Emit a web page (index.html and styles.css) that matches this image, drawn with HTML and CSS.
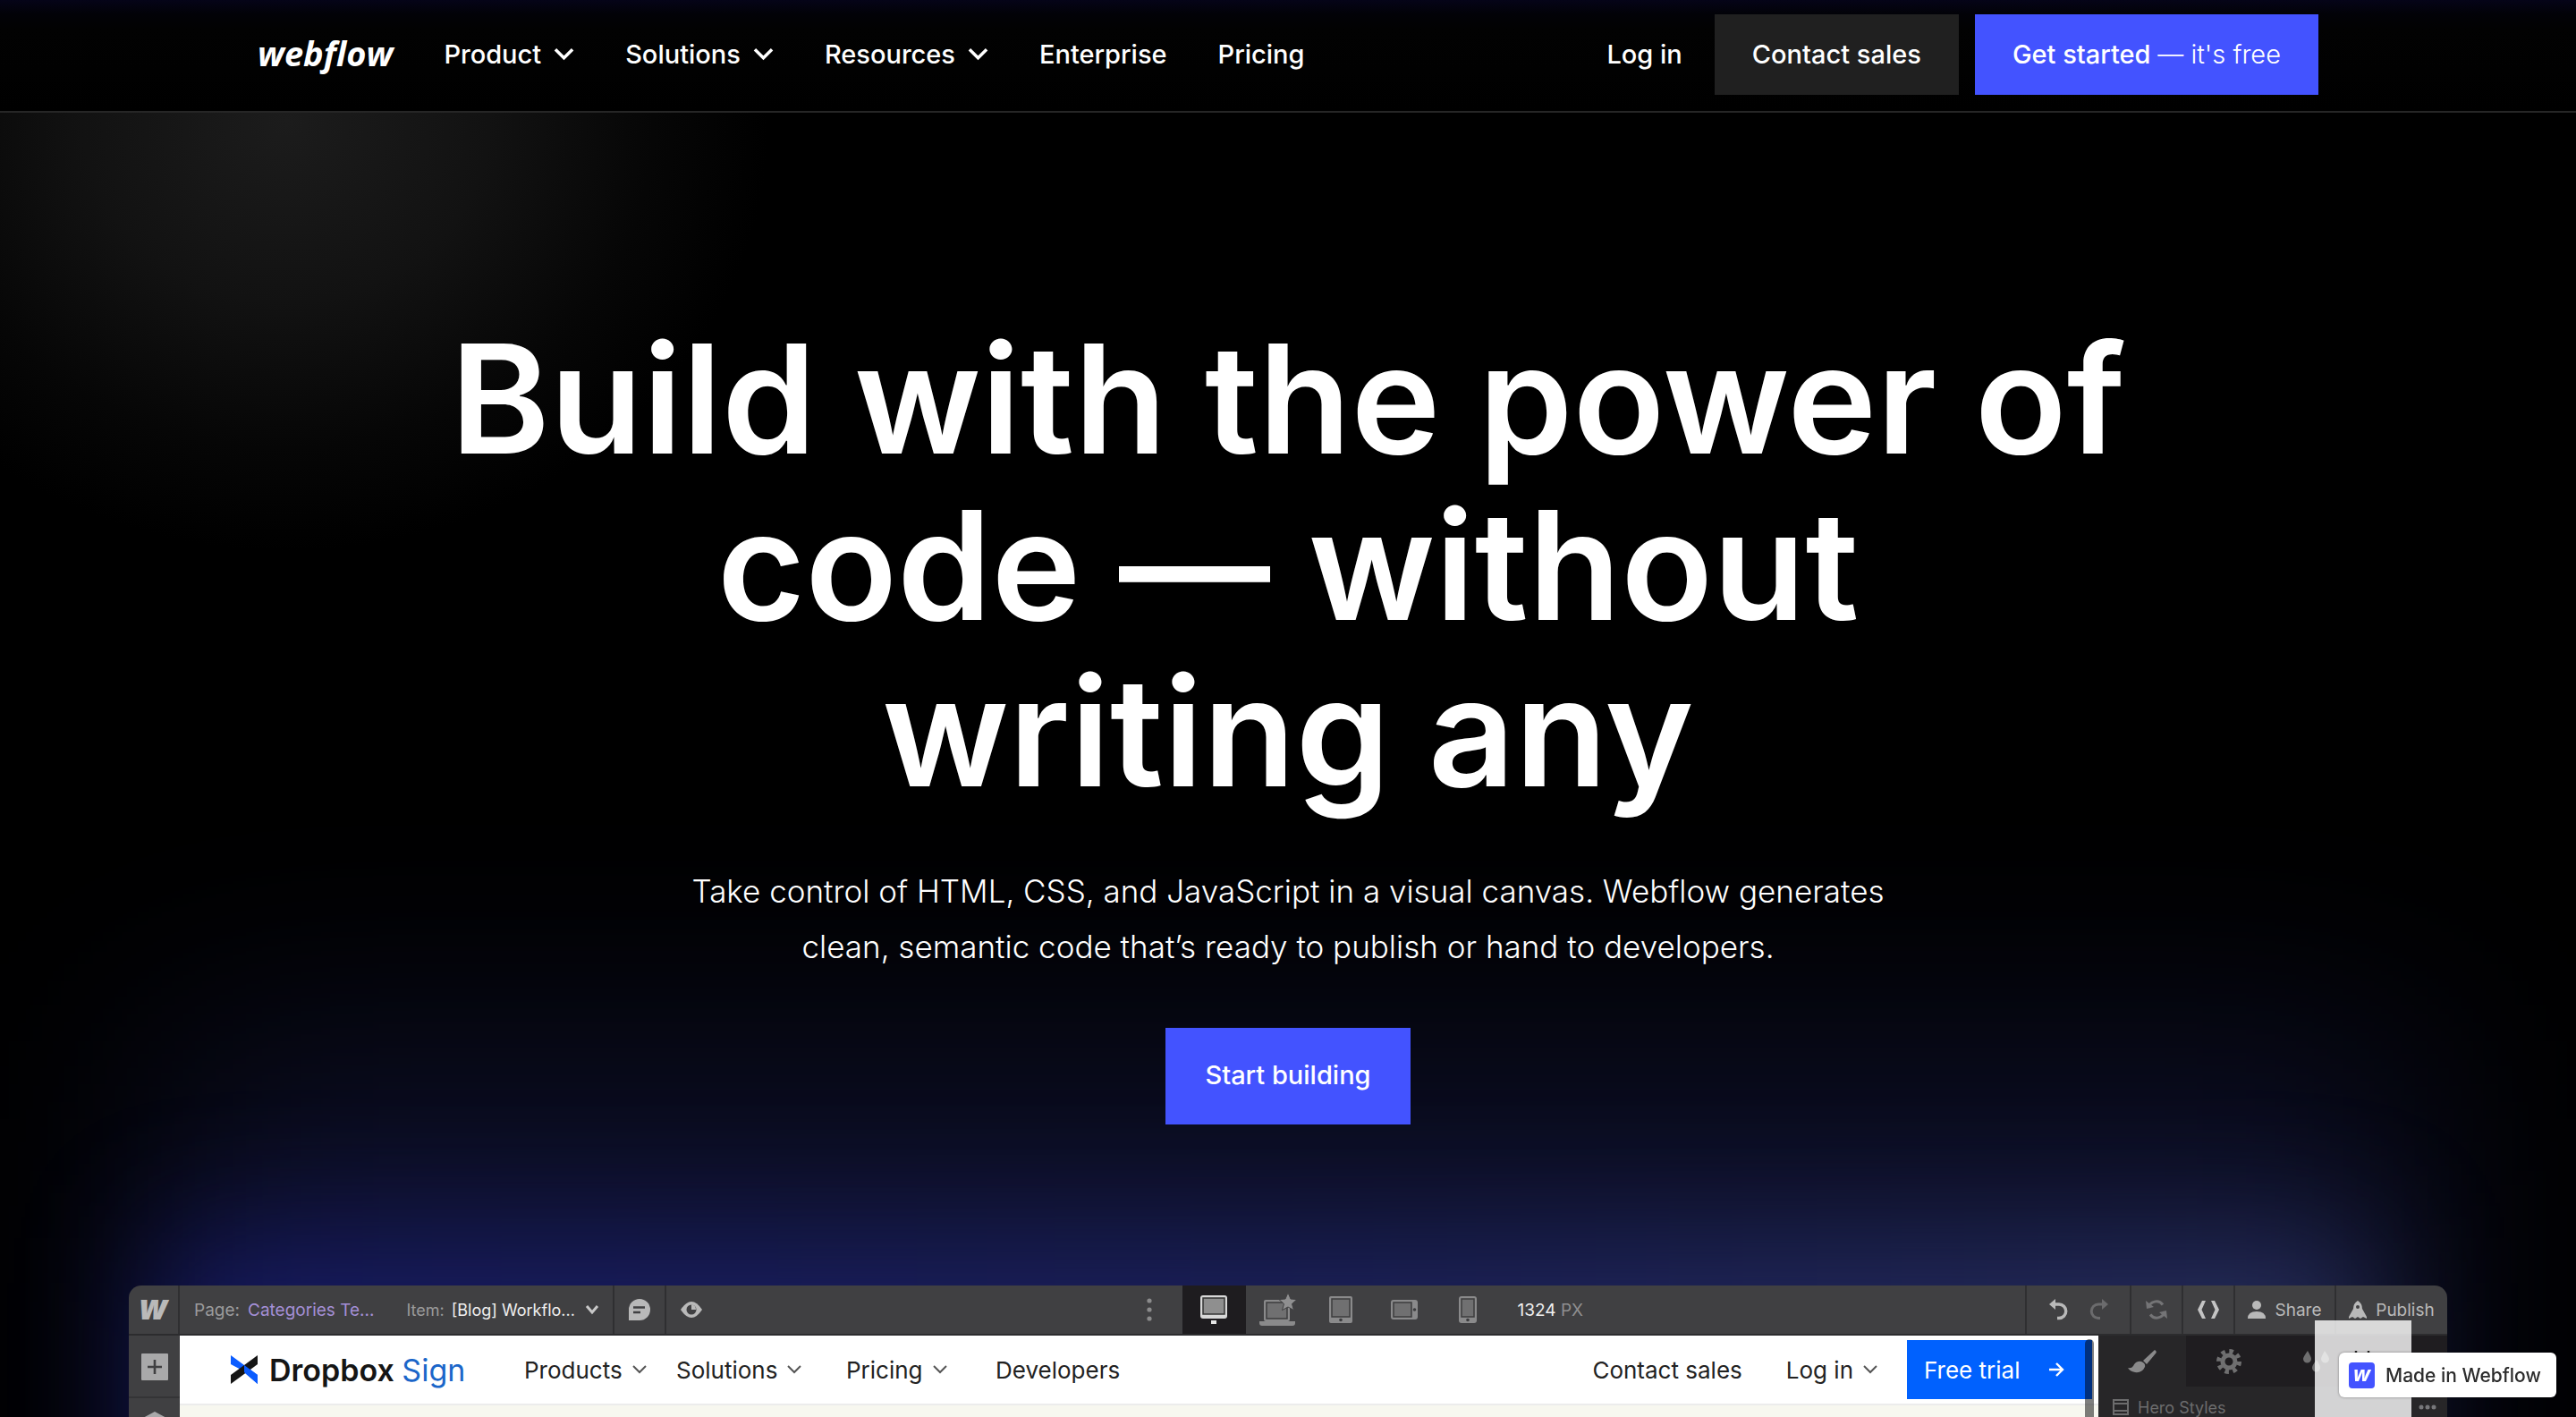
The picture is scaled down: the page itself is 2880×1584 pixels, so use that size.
FILE: index.html
```
<!DOCTYPE html>
<html lang="en">
<head>
<meta charset="utf-8">
<title>Webflow</title>
<link rel="stylesheet" href="styles.css">
</head>
<body>
<svg class="defs" aria-hidden="true">
  <symbol id="chev" viewBox="0 0 24 16"><path d="M2 3l10 10L22 3" fill="none" stroke="currentColor" stroke-width="3.6"/></symbol>
  <symbol id="chev-thin" viewBox="0 0 16 12"><path d="M1 2l7 7 7-7" fill="none" stroke="currentColor" stroke-width="2"/></symbol>
</svg>

<header class="site-header">
  <nav class="site-nav" aria-label="Main">
    <a class="wordmark" href="#">webflow</a>
    <button class="nav-item" type="button">Product <svg class="nav-chev"><use href="#chev"/></svg></button>
    <button class="nav-item" type="button">Solutions <svg class="nav-chev"><use href="#chev"/></svg></button>
    <button class="nav-item" type="button">Resources <svg class="nav-chev"><use href="#chev"/></svg></button>
    <a class="nav-item" href="#">Enterprise</a>
    <a class="nav-item" href="#">Pricing</a>
    <div class="nav-actions">
      <a class="nav-item login" href="#">Log in</a>
      <a class="btn btn-dark" href="#">Contact sales</a>
      <a class="btn btn-primary" href="#">Get started <span class="light">— it's free</span></a>
    </div>
  </nav>
</header>

<main class="hero">
  <div class="glow glow-wide"></div>
  <div class="glow glow-near"></div>
  <h1 class="headline">Build with the power of<br>code — without<br>writing any</h1>
  <p class="lead">Take control of HTML, CSS, and JavaScript in a visual canvas. Webflow generates<br>clean, semantic code that’s ready to publish or hand to developers.</p>
  <a class="btn btn-primary btn-large" href="#">Start building</a>

  <section class="designer" aria-label="Webflow Designer">
    <div class="toolbar">
      <div class="tool-left">
        <div class="cell cell-logo"><span class="mark">w</span></div>
        <div class="cell cell-page">
          <span class="muted">Page:</span><span class="page-name">Categories Te...</span>
          <span class="item-label muted">Item:</span><span class="item-name">[Blog] Workflo...</span>
          <svg class="item-chev" viewBox="0 0 16 12"><path d="M2 2l6 7 6-7" fill="none" stroke="#c8c8c8" stroke-width="3"/></svg>
        </div>
        <button class="cell cell-icon" type="button" aria-label="Comments">
          <svg width="24" height="24" viewBox="0 0 24 24"><path d="M0 24V12a12 12 0 1 1 12 12z" fill="#b9b9b9"/><path d="M5 9.500h13M5 15h8" stroke="#404042" stroke-width="2.600"/></svg>
        </button>
        <button class="cell cell-eye" type="button" aria-label="Preview">
          <svg width="24" height="18" viewBox="0 0 24 18"><path d="M0 9Q12-9 24 9Q12 27 0 9z" fill="#b9b9b9"/><circle cx="12" cy="9" r="5.500" fill="#404042"/><path d="M12 9V3a6 6 0 0 1 5 6z" fill="#b9b9b9"/></svg>
        </button>
      </div>
      <div class="devices">
        <svg class="dots" viewBox="0 0 6 28"><g fill="#8b8b8c"><circle cx="3" cy="4" r="2.600"/><circle cx="3" cy="14" r="2.600"/><circle cx="3" cy="24" r="2.600"/></g></svg>
        <button class="device active" type="button" aria-label="Desktop">
          <svg width="30" height="32" viewBox="0 0 30 32"><rect width="30" height="26" rx="3" fill="#d8d8d8"/><rect x="3" y="3" width="24" height="18" fill="#8f8f8f" stroke="#333" stroke-width="1.500"/><rect x="12" y="28" width="6" height="4" fill="#e6e6e6"/></svg>
        </button>
        <button class="device" type="button" aria-label="Laptop">
          <svg width="40" height="36" viewBox="0 0 40 36"><rect x="5" y="7" width="29" height="24" rx="2" fill="#8a8a8b"/><rect x="8" y="10" width="23" height="18" fill="#707071" stroke="#3c3c3e" stroke-width="1.500"/><path d="M0 31h40v2q0 3-3 3H3q-3 0-3-3z" fill="#8a8a8b"/><path d="M32-1l3 7 7 .6-5.500 5 2 7L32 15l-6.500 3.600 2-7-5.500-5 7-.6z" fill="#8f8f90" stroke="#404042"/></svg>
        </button>
        <button class="device" type="button" aria-label="Tablet">
          <svg width="26" height="30" viewBox="0 0 26 30"><rect width="26" height="30" rx="2" fill="#8a8a8b"/><rect x="3" y="3" width="20" height="20" fill="#707071" stroke="#3c3c3e" stroke-width="1.500"/><circle cx="13" cy="26.500" r="1.800" fill="#3c3c3e"/></svg>
        </button>
        <button class="device" type="button" aria-label="Mobile landscape">
          <svg width="30" height="22" viewBox="0 0 30 22"><rect width="30" height="22" rx="3" fill="#8a8a8b"/><rect x="3" y="3" width="20" height="16" fill="#707071" stroke="#3c3c3e" stroke-width="1.500"/><circle cx="26.500" cy="11" r="1.800" fill="#3c3c3e"/></svg>
        </button>
        <button class="device" type="button" aria-label="Mobile portrait">
          <svg width="20" height="30" viewBox="0 0 20 30"><rect width="20" height="30" rx="3" fill="#8a8a8b"/><rect x="3" y="3" width="14" height="20" fill="#707071" stroke="#3c3c3e" stroke-width="1.500"/><circle cx="10" cy="26.500" r="1.800" fill="#3c3c3e"/></svg>
        </button>
        <span class="size"><b class="size-value">1324</b> PX</span>
      </div>
      <div class="tool-right">
        <div class="cell cell-history">
          <svg width="20" height="24" viewBox="0 0 20 24"><path d="M5 6h6a7.500 7.500 0 0 1 0 15.500H9" fill="none" stroke="#b9b9b9" stroke-width="3.400"/><path d="M0 6l7-6v12z" fill="#b9b9b9"/></svg>
          <svg width="20" height="24" viewBox="0 0 20 24"><path d="M15 6H9a7.500 7.500 0 0 0 0 15.500h2" fill="none" stroke="#6b6b6d" stroke-width="3"/><path d="M20 6l-7-6v12z" fill="#6b6b6d"/></svg>
        </div>
        <div class="cell cell-icon">
          <svg width="24" height="22" viewBox="0 0 24 22"><g fill="none" stroke="#747476" stroke-width="3"><path d="M3 9a9 9 0 0 1 16-3.500"/><path d="M21 13a9 9 0 0 1-16 3.500"/></g><path d="M0 1l1 9 8-2zM24 21l-1-9-8 2z" fill="#747476"/></svg>
        </div>
        <div class="cell cell-icon">
          <svg width="24" height="20" viewBox="0 0 24 20"><path d="M9 0L4.500 10 9 20H5L0 10 5 0zM15 0l4.500 10L15 20h4l5-10-5-10z" fill="#c4c4c4"/></svg>
        </div>
        <button class="cell cell-share" type="button">
          <svg width="20" height="20" viewBox="0 0 20 20"><circle cx="10" cy="5" r="5" fill="#b9b9b9"/><path d="M0 20q0-8 10-8t10 8z" fill="#b9b9b9"/></svg>Share
        </button>
        <button class="cell cell-publish" type="button">
          <svg width="20" height="20" viewBox="0 0 20 20"><path d="M10 0q5 3 5 9l5 9v2l-4-2-3 2-3-2-3 2-3-2-4 2v-2l5-9q0-6 5-9z" fill="#b9b9b9"/><circle cx="10" cy="7" r="2" fill="#404042"/></svg>Publish
        </button>
      </div>
    </div>

    <div class="workspace">
      <div class="sidebar">
        <button class="side-btn" type="button" aria-label="Add">
          <svg width="30" height="30" viewBox="0 0 30 30"><rect width="30" height="30" rx="1" fill="#a9a9aa"/><path d="M15 7v16M7 15h16" stroke="#404042" stroke-width="2.600"/></svg>
        </button>
        <button class="side-btn" type="button" aria-label="Symbols">
          <svg width="30" height="34" viewBox="0 0 30 34"><path d="M15 0l15 8v18l-15 8-15-8V8z" fill="#a9a9aa"/></svg>
        </button>
      </div>

      <div class="canvas">
        <div class="canvas-header">
          <a class="brand" href="#">
            <svg width="30" height="32" viewBox="0 0 30 32"><path d="M0 0l15 11v7L0 10zM15 11l15 11v10L15 19z" fill="#0b5cff"/><path d="M30 0v10L0 32V22z" fill="#151515"/><path d="M15 11l15 11v10L15 19z" fill="#0b5cff"/></svg>
            <span class="brand-name">Dropbox <span class="brand-sign">Sign</span></span>
          </a>
          <div class="canvas-menu">
            <a class="menu-item" href="#">Products <svg class="menu-chev"><use href="#chev-thin"/></svg></a>
            <a class="menu-item" href="#">Solutions <svg class="menu-chev"><use href="#chev-thin"/></svg></a>
            <a class="menu-item" href="#">Pricing <svg class="menu-chev"><use href="#chev-thin"/></svg></a>
            <a class="menu-item" href="#">Developers</a>
          </div>
          <div class="canvas-actions">
            <a class="menu-item" href="#">Contact sales</a>
            <a class="menu-item menu-login" href="#">Log in <svg class="menu-chev"><use href="#chev-thin"/></svg></a>
            <a class="trial" href="#">Free trial
              <svg width="16" height="16" viewBox="0 0 16 16"><path d="M0 8h14M8 1l7 7-7 7" fill="none" stroke="#fff" stroke-width="2.400"/></svg>
            </a>
          </div>
        </div>
        <div class="scrollbar"></div>
      </div>

      <div class="panel">
        <div class="tabs">
          <button class="tab tab-on" type="button" aria-label="Style">
            <svg width="32" height="26" viewBox="0 0 32 26"><path d="M30 0q3 2 1 4L21 16l-4-4z" fill="#8a8a8b"/><path d="M15 13q5 2 4 6-3 7-11 6-6-1-8-5 4 1 6-2 3-6 9-5z" fill="#8a8a8b"/></svg>
          </button>
          <button class="tab" type="button" aria-label="Settings">
            <svg width="28" height="28" viewBox="-14 -14 28 28"><g fill="none" stroke="#6f6f70"><circle r="7" stroke-width="5"/><circle r="11.500" stroke-width="5" stroke-dasharray="4.500 4.530"/></g></svg>
          </button>
          <button class="tab" type="button" aria-label="Style manager">
            <svg width="30" height="28" viewBox="0 0 30 28"><path d="M5 2q4 7 4 9a4 4 0 0 1-9 0q0-2 5-9zM24 2q5 7 5 9a4 4 0 0 1-9 0q0-2 4-9zM15 12q4 6 4 9a4 4 0 0 1-9 0q0-3 5-9z" fill="#6f6f70"/></svg>
          </button>
          <button class="tab" type="button" aria-label="Interactions"></button>
        </div>
        <div class="style-row">
          <svg width="18" height="18" viewBox="0 0 18 18"><path d="M1 1h16v16H1zM1 5h16M1 13h16" fill="none" stroke="#6c6c6d" stroke-width="2"/></svg>
          <span>Hero Styles</span>
          <svg class="more" width="20" height="6" viewBox="0 0 20 6"><g fill="#77777a"><circle cx="3" cy="3" r="2.500"/><circle cx="10" cy="3" r="2.500"/><circle cx="17" cy="3" r="2.500"/></g></svg>
        </div>
      </div>
    </div>
  </section>
</main>

<div class="player">
  <svg width="20" height="20" viewBox="0 0 20 20"><path d="M2 0v20M16 0v20" stroke="#222" stroke-width="2.400"/></svg>
</div>
<a class="badge" href="#"><span class="badge-mark">w</span>Made in Webflow</a>
</body>
</html>
```
FILE: styles.css
```
* { box-sizing: border-box; }

body {
  margin: 0;
  min-height: 100vh;
  display: flex;
  flex-direction: column;
  background: #000;
  color: #fff;
  font-family: Inter, "Liberation Sans", sans-serif;
}

a { color: inherit; text-decoration: none; }
button { margin: 0; padding: 0; border: 0; background: none; color: inherit; font: inherit; }
svg { display: block; flex: none; overflow: visible; }
.defs { position: absolute; width: 0; height: 0; }

/* Header */
.site-header {
  border-bottom: 2px solid #262626;
  background: linear-gradient(#050418, #020207 16px, #020202 32px, #000);
}
.site-nav {
  display: flex;
  align-items: center;
  gap: 57px;
  width: 80%;
  height: 124px;
  margin: 0 auto;
  padding-bottom: 2px;
  font-size: 29px;
  font-weight: 500;
}
.wordmark { padding-bottom: 4px; font: italic 700 38px/44px "Open Sans", "Noto Sans", sans-serif; }
.nav-item { display: flex; align-items: center; gap: 14px; padding-bottom: 2px; white-space: nowrap; }
.nav-chev { width: 23px; height: 16px; }
.nav-actions { display: flex; align-items: center; gap: 18px; margin-left: auto; }
.login { margin-right: 18px; }

.btn {
  display: flex;
  align-items: center;
  height: 90px;
  padding: 0 42px 2px;
  font-weight: 500;
  white-space: pre;
}
.btn-dark { background: #202020; }
.btn-primary { background: #4353ff; }
.light { font-weight: 300; }
.btn-large { height: 108px; padding: 0 44px 4px; font-size: 29px; }

/* Hero */
.hero {
  position: relative;
  flex: 1;
  display: flex;
  flex-direction: column;
  align-items: center;
  overflow: hidden;
  padding-top: 227px;
  background: radial-gradient(ellipse 540px 480px at 320px 10px, #1c1c1c, #121212 42%, #060606 76%, #000);
}
.hero > * { position: relative; }
.hero > .glow { position: absolute; pointer-events: none; }
.glow-wide {
  left: 6%;
  right: 6%;
  bottom: -300px;
  height: 720px;
  background: #161a44;
  opacity: .6;
  filter: blur(130px);
}
.glow-near {
  left: 6%;
  right: 8%;
  bottom: -280px;
  height: 480px;
  background: linear-gradient(90deg, #191d70, #1f2568 50%, #2c3464);
  opacity: .85;
  filter: blur(75px);
}
.headline {
  margin: 0;
  font-size: 169px;
  font-weight: 600;
  line-height: 186px;
  text-align: center;
}
.lead {
  margin: 54px 0 60px;
  font-size: 35px;
  font-weight: 300;
  line-height: 62px;
  text-align: center;
}

/* Designer window */
.designer {
  flex: 1;
  display: flex;
  flex-direction: column;
  width: 90%;
  margin-top: 180px;
  overflow: hidden;
  border-radius: 14px 14px 0 0;
  background: #404042;
}
.toolbar {
  display: flex;
  height: 56px;
  border-bottom: 2px solid #2c2c2e;
  color: #b9b9b9;
  font-size: 19px;
}
.cell {
  display: flex;
  align-items: center;
  justify-content: center;
  white-space: nowrap;
}
.tool-left { display: flex; flex: 0 0 43%; }
.tool-right { display: flex; margin-left: auto; }
.tool-left .cell { border-right: 2px solid #2f2f31; }
.tool-left .cell-eye { width: 56px; border-right: 0; }
.tool-right .cell { border-left: 2px solid #2f2f31; }
.cell-logo { width: 57px; }
.mark { font: italic 800 38px/54px "Open Sans", sans-serif; height: 54px; margin-top: -8px; }
.cell-page { width: 486px; justify-content: flex-start; padding: 0 15px 0 16px; }
.muted { color: #9b9b9c; }
.page-name { margin-left: 9px; color: #a48fd6; }
.item-label { margin-left: 36px; font-size: 18px; }
.item-name { margin-left: 8px; color: #f0f0f0; font-size: 18px; }
.item-chev { width: 16px; height: 12px; margin-left: auto; }
.cell-icon { width: 58px; }
.devices { display: flex; align-items: center; }
.dots { width: 6px; height: 28px; margin: 0 34px 0 23px; }
.device { display: flex; align-items: center; justify-content: center; width: 71px; height: 54px; }
.active { background: #1e1c1f; }
.size { margin-left: 20px; color: #8f8f90; }
.size-value { color: #f0f0f0; font-weight: 400; }
.cell-history { width: 117px; gap: 26px; }
.cell-share { width: 113px; gap: 10px; }
.cell-publish { width: 126px; gap: 10px; }

.workspace {
  display: flex;
  flex: 1 0 91px;
  height: 91px;
  overflow: hidden;
}
.sidebar { width: 57px; flex: none; }
.side-btn {
  display: flex;
  justify-content: center;
  width: 100%;
  height: 70px;
  padding-top: 20px;
  border-bottom: 2px solid #343436;
}
.side-btn + .side-btn { padding-top: 15px; }
.canvas { position: relative; flex: 1; background: #f7f7ef; color: #222; }
.canvas-header {
  display: flex;
  align-items: center;
  height: 78px;
  padding: 0 7px 0 57px;
  border-bottom: 2px solid #ececec;
  background: #fff;
  font-size: 26px;
}
.brand { display: flex; align-items: center; gap: 13px; width: 328px; color: #151515; }
.brand-name { font-size: 34px; font-weight: 600; white-space: nowrap; }
.brand-sign { color: #1b66c9; font-weight: 400; }
.canvas-menu { display: grid; grid-template-columns: 170px 190px 167px auto; }
.menu-item { display: flex; align-items: center; gap: 11px; white-space: nowrap; }
.menu-chev { width: 16px; height: 12px; color: #555; }
.canvas-actions { display: flex; align-items: center; margin-left: auto; }
.menu-login { margin: 0 33px 0 49px; }
.trial {
  display: flex;
  align-items: center;
  justify-content: space-between;
  width: 207px;
  height: 66px;
  padding: 0 32px 0 19px;
  background: #0061fe;
  color: #fff;
}
.scrollbar {
  position: absolute;
  top: 4px;
  right: 5px;
  bottom: 0;
  width: 10px;
  border-radius: 5px 5px 0 0;
  background: rgba(0, 0, 0, .5);
}

.panel { width: 390px; flex: none; background: #272628; }
.tabs { display: grid; grid-template-columns: repeat(4, 1fr); height: 57px; background: #1f1d20; }
.tab { display: flex; align-items: center; justify-content: center; }
.tab-on { background: #272628; }
.style-row {
  display: flex;
  align-items: center;
  gap: 10px;
  height: 46px;
  padding: 0 12px 0 16px;
  color: #6c6c6d;
  font-size: 18px;
}
.more { margin-left: auto; }

/* Floating elements */
.player {
  position: fixed;
  right: 184px;
  bottom: 0;
  width: 108px;
  height: 108px;
  padding: 34px 0 0 44px;
  background: rgba(255, 255, 255, .8);
}
.badge {
  position: fixed;
  right: 22px;
  bottom: 22px;
  display: flex;
  align-items: center;
  gap: 12px;
  width: 243px;
  height: 50px;
  padding-left: 11px;
  border-radius: 6px;
  background: #fff;
  box-shadow: 0 0 3px rgba(0, 0, 0, .4);
  color: #2c2c2c;
  font-size: 21px;
  font-weight: 500;
  white-space: nowrap;
}
.badge-mark {
  width: 29px;
  height: 29px;
  border-radius: 4px;
  background: #4353ff;
  color: #fff;
  font: italic 700 24px/23px "Open Sans", sans-serif;
  text-align: center;
}
```
